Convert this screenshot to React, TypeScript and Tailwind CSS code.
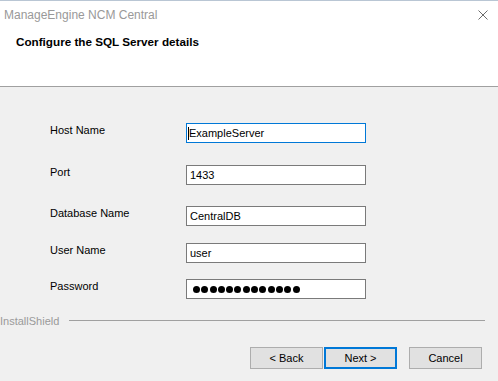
import React from 'react';

const font = { fontFamily: '"Liberation Sans", Arial, sans-serif' };

type Field = { label: string; value: string; gap: string; focused?: boolean; secret?: boolean };

const fields: Field[] = [
  { label: 'Host Name', value: 'ExampleServer', gap: 'mt-0', focused: true },
  { label: 'Port', value: '1433', gap: 'mt-[22px]' },
  { label: 'Database Name', value: 'CentralDB', gap: 'mt-[21px]' },
  { label: 'User Name', value: 'user', gap: 'mt-[17px]' },
  { label: 'Password', value: '', gap: 'mt-[16px]', secret: true },
];

const Dots: React.FC<{ count: number }> = ({ count }) => (
  <div className="flex items-center gap-[1.3px] pl-[6px]">
    {Array.from({ length: count }).map((_, i) => (
      <span key={i} className="block w-[7px] h-[7px] rounded-full bg-black" />
    ))}
  </div>
);

const Button: React.FC<{ label: string; primary?: boolean }> = ({ label, primary }) => (
  <button
    className={
      primary
        ? 'w-[73px] h-[22px] bg-[#e1e1e1] border-2 border-[#0078d7] text-[11px] text-black flex items-center justify-center'
        : 'w-[73px] h-[22px] bg-[#e1e1e1] border border-[#adadad] text-[11px] text-black flex items-center justify-center'
    }
    style={font}
  >
    {label}
  </button>
);

const App: React.FC = () => {
  return (
    <div className="w-[498px] h-[381px] flex flex-col bg-[#f0f0f0] overflow-hidden" style={font}>
      {/* Header */}
      <div className="h-[87px] bg-white border-t border-[#b9c6d4] border-b border-b-[#a0a0a0] flex flex-col">
        <div className="h-[27px] flex items-center justify-between pl-[4px] pr-[10px]">
          <span className="text-[12px] text-[#999999] leading-[14px]">ManageEngine NCM Central</span>
          <svg width="10" height="10" viewBox="0 0 10 10" className="text-[#6b6b6b]">
            <path d="M0.5 0.5 L9.5 9.5 M9.5 0.5 L0.5 9.5" stroke="currentColor" strokeWidth="1" fill="none" />
          </svg>
        </div>
        <h1 className="pl-[16px] pt-[7px] text-[11.7px] leading-[14px] font-bold text-black">
          Configure the SQL Server details
        </h1>
      </div>

      {/* Body */}
      <div className="flex-1 flex flex-col pt-[36px]">
        <div className="flex flex-col pl-[50px]">
          {fields.map((f) => (
            <div key={f.label} className={`flex items-start ${f.gap}`}>
              <span className="w-[136px] text-[11px] leading-[14px] text-black">{f.label}</span>
              <div
                className={
                  f.focused
                    ? 'w-[180px] h-[20px] bg-white border border-[#0078d7] flex items-center'
                    : 'w-[180px] h-[20px] bg-white border border-[#7a7a7a] flex items-center'
                }
              >
                {f.secret ? (
                  <Dots count={13} />
                ) : (
                  <div className="flex items-center pl-[1px]">
                    {f.focused && <span className="block w-px h-[13px] bg-black" />}
                    <span className={f.focused ? 'text-[11px] leading-[14px] text-black' : 'text-[11px] leading-[14px] text-black pl-[2px]'}>
                      {f.value}
                    </span>
                  </div>
                )}
              </div>
            </div>
          ))}
        </div>

        {/* InstallShield divider */}
        <div className="flex items-start mt-[15px] pr-[13px]">
          <span className="text-[11px] leading-[14px] text-[#9a9a9a]">InstallShield</span>
          <div className="flex-1 h-px bg-[#a0a0a0] mt-[6px] ml-[10px]" />
        </div>

        {/* Buttons */}
        <div className="flex items-start justify-end pr-[16px] mt-[19px]">
          <div className="flex gap-px">
            <Button label="< Back" />
            <Button label="Next >" primary />
          </div>
          <div className="flex ml-[12px]">
            <Button label="Cancel" />
          </div>
        </div>
      </div>
    </div>
  );
};

export default App;
